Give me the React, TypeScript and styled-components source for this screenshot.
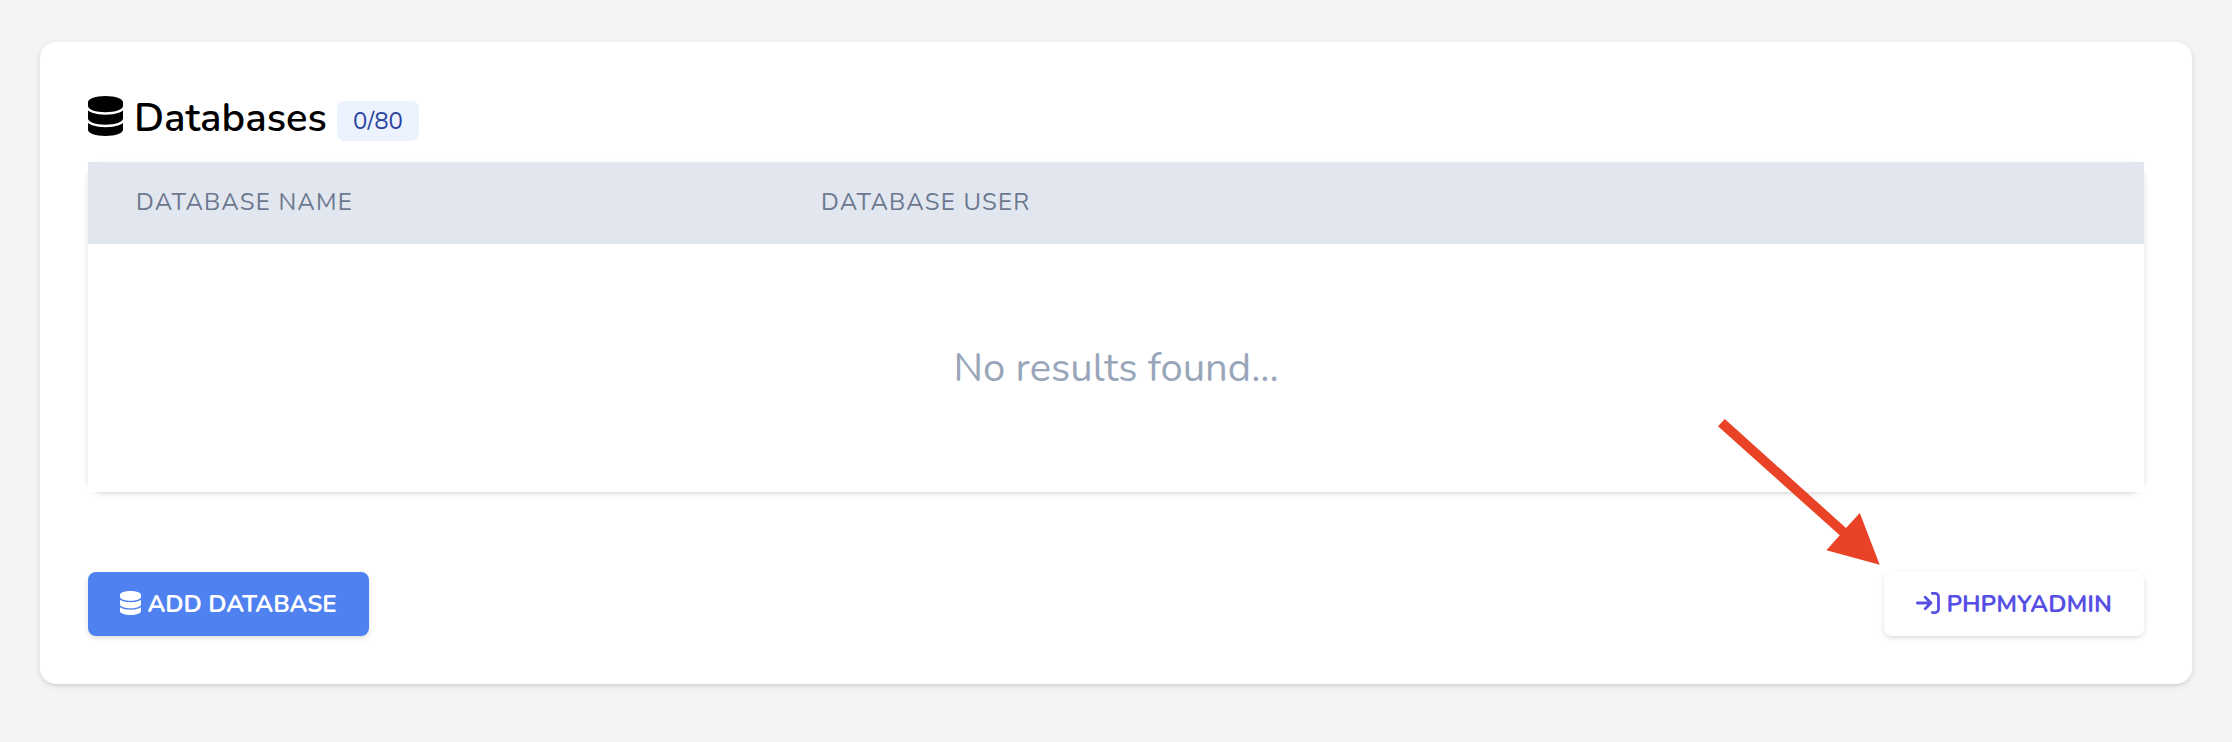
import React from "react";
import styled, { createGlobalStyle } from "styled-components";
import { FaDatabase } from "react-icons/fa6";

const GlobalStyle = createGlobalStyle`
  *, *::before, *::after { box-sizing: border-box; }
  body {
    margin: 0;
    background: #f4f4f4;
    font-family: Nunito, Lato, "Open Sans", sans-serif;
    font-size: 24px;
  }
`;

const shadow = "0 2px 6px rgba(0, 0, 0, 0.1), 0 2px 4px -2px rgba(0, 0, 0, 0.1)";

const Page = styled.main`
  min-height: 742px;
  padding: 42px 40px 58px;
`;

const Card = styled.section`
  position: relative;
  height: 642px;
  padding: 48px;
  display: flex;
  flex-direction: column;
  background: #fff;
  border-radius: 16px;
  box-shadow: ${shadow};
`;

const Header = styled.header`
  height: 72px;
  display: flex;
  align-items: flex-start;
`;

const TitleIcon = styled(FaDatabase)`
  width: 35px;
  height: 40px;
  margin-top: 6px;
  color: #000;
`;

const Title = styled.h1`
  width: 214px;
  margin: 0;
  padding-left: 11px;
  font-size: 40px;
  line-height: 56px;
  font-weight: 600;
  white-space: nowrap;
`;

const Badge = styled.span`
  width: 82px;
  height: 40px;
  margin-top: 11px;
  display: flex;
  align-items: center;
  justify-content: center;
  border-radius: 8px;
  background: #ecf2fe;
  color: #2c469f;
  line-height: 40px;
`;

const Table = styled.div`
  height: 330px;
  flex: none;
  border-radius: 16px;
  box-shadow: ${shadow};
`;

const HeadRow = styled.div`
  height: 82px;
  display: grid;
  grid-template-columns: 685px 1fr;
  background: #e2e7ef;
`;

const HeadCell = styled.div`
  padding-left: 48px;
  color: #6b7890;
  line-height: 80px;
  letter-spacing: 1.2px;
  white-space: nowrap;
`;

const Empty = styled.div`
  height: 248px;
  display: flex;
  align-items: center;
  justify-content: center;
  background: #fff;
  color: #99a6ba;
  font-size: 40px;
`;

const Actions = styled.footer`
  margin-top: 80px;
  display: flex;
  justify-content: space-between;
`;

const Button = styled.button<{ $primary?: boolean }>`
  width: ${(p) => (p.$primary ? 281 : 260)}px;
  height: 64px;
  padding: 0 0 0 32px;
  display: flex;
  align-items: center;
  border: 0;
  border-radius: 8px;
  background: ${(p) => (p.$primary ? "#4f81f0" : "#fff")};
  color: ${(p) => (p.$primary ? "#fff" : "#574fe3")};
  box-shadow: ${shadow};
  font: 700 24px/64px Nunito, Lato, "Open Sans", sans-serif;
  white-space: nowrap;
`;

const ButtonIcon = styled(FaDatabase)`
  width: 21px;
  height: 24px;
  margin-top: -2px;
`;

const SignInIcon = styled.svg`
  width: 24px;
  height: 24px;
  margin-top: -2px;
`;

const Label = styled.span`
  padding-left: 6.4px;
`;

const Arrow = styled.svg`
  position: absolute;
  left: 1677px;
  top: 376px;
  width: 164px;
  height: 148px;
  fill: #ea4226;
`;

export default function App() {
  return (
    <Page>
      <GlobalStyle />
      <Card>
        <Header>
          <TitleIcon />
          <Title>Databases</Title>
          <Badge>0/80</Badge>
        </Header>
        <Table>
          <HeadRow>
            <HeadCell>DATABASE NAME</HeadCell>
            <HeadCell>DATABASE USER</HeadCell>
          </HeadRow>
          <Empty>No results found...</Empty>
        </Table>
        <Actions>
          <Button $primary>
            <ButtonIcon />
            <Label>ADD DATABASE</Label>
          </Button>
          <Button>
            <SignInIcon viewBox="0 0 24 24" fill="none" stroke="currentColor" strokeWidth="2.8" strokeLinecap="round" strokeLinejoin="round">
              <path d="M1.4 12H15M9.2 6.3L15 12L9.2 17.7M16.3 2.4H19.2A3.3 3.3 0 0 1 22.5 5.7V18.3A3.3 3.3 0 0 1 19.2 21.6H16.3" />
            </SignInIcon>
            <Label>PHPMYADMIN</Label>
          </Button>
        </Actions>
        <Arrow viewBox="0 0 164 148">
          <path d="M1 8.3L7.8 1L129 110L142.8 95L162.7 146.7L109.4 132.3L122.8 117.3Z" />
        </Arrow>
      </Card>
    </Page>
  );
}
